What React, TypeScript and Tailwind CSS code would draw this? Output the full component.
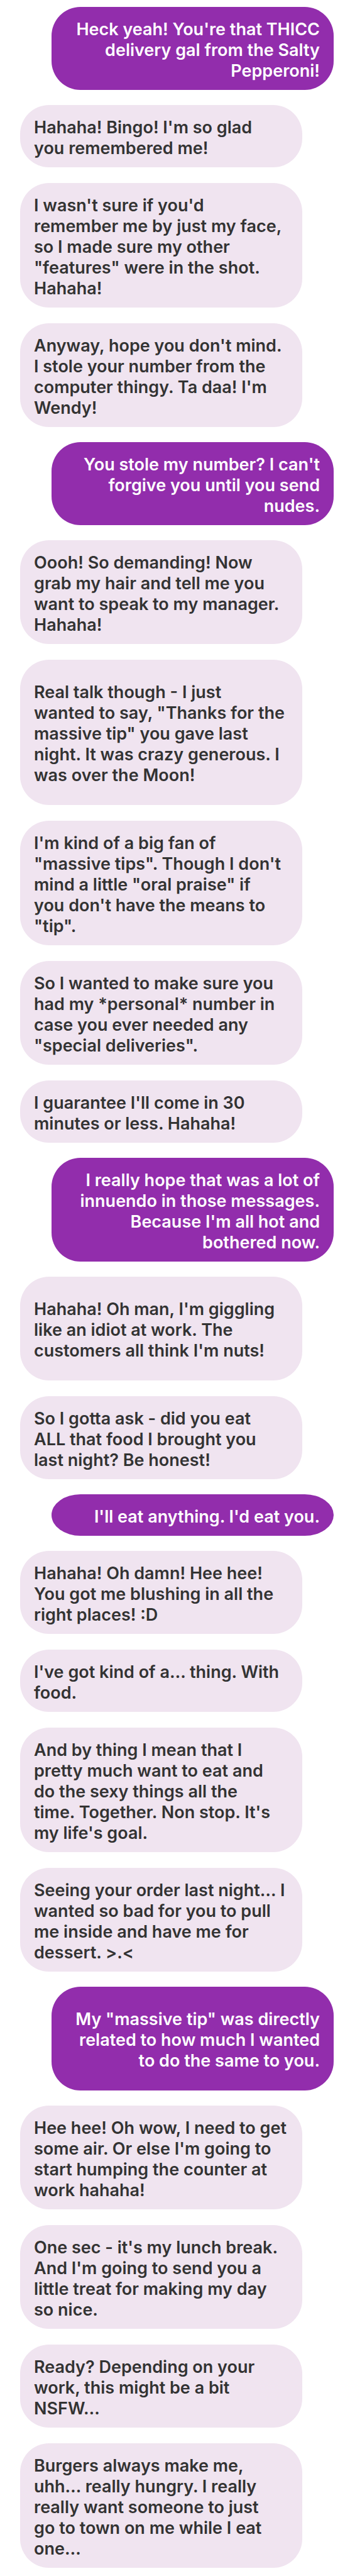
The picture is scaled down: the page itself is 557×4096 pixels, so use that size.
type Sender = "me" | "them";

interface Message {
  from: Sender;
  lines: string[];
  roomy?: boolean;
}

const messages: Message[] = [
  { from: "me", lines: ["Heck yeah! You're that THICC", "delivery gal from the Salty", "Pepperoni!"] },
  { from: "them", lines: ["Hahaha! Bingo! I'm so glad", "you remembered me!"] },
  {
    from: "them",
    lines: ["I wasn't sure if you'd", "remember me by just my face,", "so I made sure my other", '"features" were in the shot.', "Hahaha!"],
  },
  {
    from: "them",
    lines: ["Anyway, hope you don't mind.", "I stole your number from the", "computer thingy. Ta daa! I'm", "Wendy!"],
  },
  { from: "me", lines: ["You stole my number? I can't", "forgive you until you send", "nudes."] },
  {
    from: "them",
    lines: ["Oooh! So demanding! Now", "grab my hair and tell me you", "want to speak to my manager.", "Hahaha!"],
  },
  {
    from: "them",
    roomy: true,
    lines: ["Real talk though - I just", 'wanted to say, "Thanks for the', 'massive tip" you gave last', "night. It was crazy generous. I", "was over the Moon!"],
  },
  {
    from: "them",
    lines: ["I'm kind of a big fan of", '"massive tips". Though I don\'t', 'mind a little "oral praise" if', "you don't have the means to", '"tip".'],
  },
  {
    from: "them",
    lines: ["So I wanted to make sure you", "had my *personal* number in", "case you ever needed any", '"special deliveries".'],
  },
  { from: "them", lines: ["I guarantee I'll come in 30", "minutes or less. Hahaha!"] },
  {
    from: "me",
    lines: ["I really hope that was a lot of", "innuendo in those messages.", "Because I'm all hot and", "bothered now."],
  },
  {
    from: "them",
    roomy: true,
    lines: ["Hahaha! Oh man, I'm giggling", "like an idiot at work. The", "customers all think I'm nuts!"],
  },
  { from: "them", lines: ["So I gotta ask - did you eat", "ALL that food I brought you", "last night? Be honest!"] },
  { from: "me", lines: ["I'll eat anything. I'd eat you."] },
  { from: "them", lines: ["Hahaha! Oh damn! Hee hee!", "You got me blushing in all the", "right places! :D"] },
  { from: "them", lines: ["I've got kind of a… thing. With", "food."] },
  {
    from: "them",
    lines: ["And by thing I mean that I", "pretty much want to eat and", "do the sexy things all the", "time. Together. Non stop. It's", "my life's goal."],
  },
  {
    from: "them",
    lines: ["Seeing your order last night… I", "wanted so bad for you to pull", "me inside and have me for", "dessert. >.<"],
  },
  {
    from: "me",
    roomy: true,
    lines: ['My "massive tip" was directly', "related to how much I wanted", "to do the same to you."],
  },
  {
    from: "them",
    lines: ["Hee hee! Oh wow, I need to get", "some air. Or else I'm going to", "start humping the counter at", "work hahaha!"],
  },
  {
    from: "them",
    lines: ["One sec - it's my lunch break.", "And I'm going to send you a", "little treat for making my day", "so nice."],
  },
  { from: "them", lines: ["Ready? Depending on your", "work, this might be a bit", "NSFW…"] },
  {
    from: "them",
    lines: ["Burgers always make me,", "uhh… really hungry. I really", "really want someone to just", "go to town on me while I eat", "one…"],
  },
];

function Bubble({ message, previous }: { message: Message; previous?: Message }) {
  const mine = message.from === "me";
  const gap = !previous ? "" : previous.from === message.from ? "mt-[25px]" : "mt-6";
  const side = mine
    ? "self-end bg-[#922dac] text-right text-white"
    : "self-start bg-[#f0e4f0] text-left text-[#333333]";
  const padding = message.roomy ? "pt-[35px] pb-[31px]" : "pt-[19px] pb-[14px]";
  const corners = message.lines.length === 1 ? "rounded-[46px/33px]" : "rounded-[46px]";

  return (
    <li className={`w-[90%] px-[22px] whitespace-pre ${gap} ${side} ${padding} ${corners}`}>
      <p>{message.lines.join("\n")}</p>
    </li>
  );
}

export default function App() {
  return (
    <main className="bg-white pt-[11px] pr-[26px] pb-[13px] pl-8 font-['Inter',sans-serif] text-[27px] leading-[33px] font-semibold">
      <ul className="flex flex-col">
        {messages.map((message, i) => (
          <Bubble key={i} message={message} previous={messages[i - 1]} />
        ))}
      </ul>
    </main>
  );
}
